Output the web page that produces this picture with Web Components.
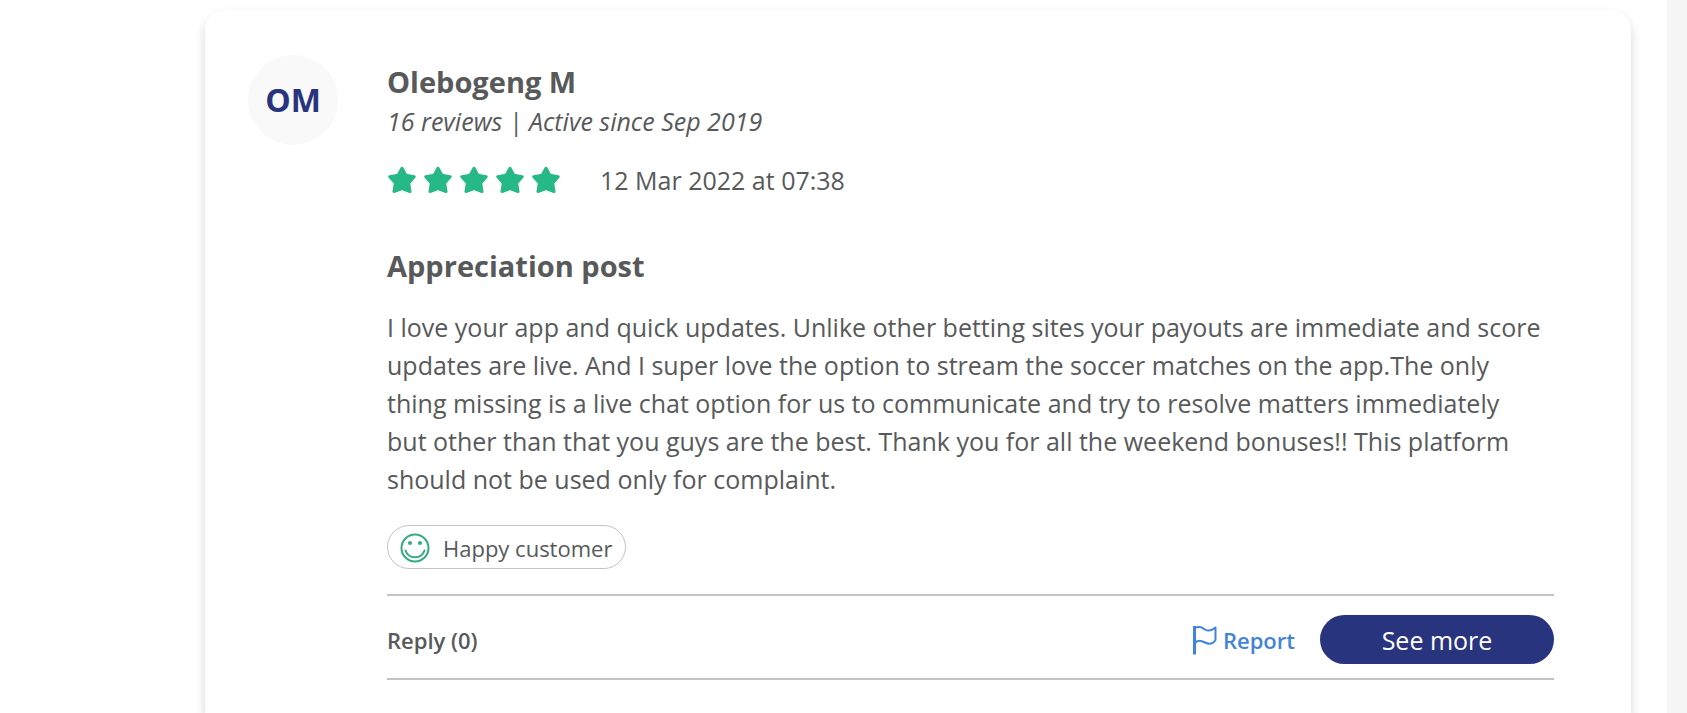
<!DOCTYPE html>
<html lang="en">
<head>
<meta charset="utf-8">
<meta name="viewport" content="width=device-width, initial-scale=1">
<title>Appreciation post</title>
<style>
  body {
    margin: 0;
    background: #fff;
    color: #58595b;
    font-family: "Open Sans", "Noto Sans", sans-serif;
    font-size: 25px;
    line-height: 38px;
  }
</style>
</head>
<body>
<review-page>
  <review-card>
    <user-avatar slot="avatar">OM</user-avatar>
    <span slot="name">Olebogeng M</span>
    <span slot="meta">16 reviews | Active since Sep 2019</span>
    <star-rating slot="rating" value="5"></star-rating>
    <time slot="date" datetime="2022-03-12T07:38">12 Mar 2022 at 07:38</time>
    <span slot="title">Appreciation post</span>
    I love your app and quick updates. Unlike other betting sites your payouts are immediate and score updates are live. And I super love the option to stream the soccer matches on the app.The only thing missing is a live chat option for us to communicate and try to resolve matters immediately but other than that you guys are the best. Thank you for all the weekend bonuses!! This platform should not be used only for complaint.
    <mood-tag slot="tag">Happy customer</mood-tag>
    <review-actions slot="actions">
      <span slot="reply">Reply (0)</span>
      <span slot="report">Report</span>
      <span slot="more">See more</span>
    </review-actions>
  </review-card>
</review-page>

<script>
(function () {
  function define(name, html, setup) {
    const tmpl = document.createElement("template");
    tmpl.innerHTML = html;

    customElements.define(name, class extends HTMLElement {
      constructor() {
        super();
        this.attachShadow({ mode: "open" }).appendChild(tmpl.content.cloneNode(true));
      }

      connectedCallback() {
        if (setup) setup(this, this.shadowRoot);
      }
    });
  }

  define("review-page", `
    <style>
      :host {
        display: grid;
        grid-template-columns: 1fr 20px;
        min-height: 100vh;
      }
      main {
        display: grid;
        padding: 10px 36px 0 205px;
      }
      .gutter {
        background: #f5f5f5;
      }
    </style>
    <main><slot></slot></main>
    <div class="gutter"></div>
  `);

  define("review-card", `
    <style>
      :host {
        display: block;
        border-radius: 20px 20px 0 0;
        background: #fff;
        box-shadow: 0 6px 12px rgba(0, 0, 0, 0.16);
      }
      article {
        display: grid;
        grid-template-columns: 90px 1fr;
        gap: 49px;
        padding: 45px 77px 0 43px;
      }
      .body {
        padding-top: 7px;
      }
      h2, h3 {
        margin: 0;
        font-size: 29px;
        line-height: 40px;
        font-weight: 700;
      }
      p {
        margin: 0;
      }
      .meta {
        font-style: italic;
      }
      .rating {
        display: flex;
        align-items: center;
        gap: 40px;
        margin: 21px 0 47px;
      }
      .text {
        margin: 22px 0 27px;
        padding-right: 12px;
      }
    </style>
    <article>
      <slot name="avatar"></slot>
      <div class="body">
        <h2><slot name="name"></slot></h2>
        <p class="meta"><slot name="meta"></slot></p>
        <div class="rating">
          <slot name="rating"></slot>
          <slot name="date"></slot>
        </div>
        <h3><slot name="title"></slot></h3>
        <p class="text"><slot></slot></p>
        <slot name="tag"></slot>
        <slot name="actions"></slot>
      </div>
    </article>
  `);

  define("user-avatar", `
    <style>
      :host {
        display: grid;
        place-items: center;
        width: 90px;
        height: 90px;
        border-radius: 50%;
        background: #f9f9f9;
        color: #29347f;
        font-size: 32px;
        font-weight: 700;
      }
    </style>
    <slot></slot>
  `);

  define("star-rating", `
    <style>
      :host {
        display: flex;
        gap: 8px;
        padding-left: 1px;
      }
      svg {
        width: 28px;
        height: 28px;
        fill: #27b887;
        stroke: #27b887;
        stroke-width: 3;
        stroke-linejoin: round;
      }
    </style>
  `, function (host, root) {
    if (root.querySelector("svg")) return;
    const count = Number(host.getAttribute("value"));
    host.setAttribute("role", "img");
    host.setAttribute("aria-label", count + " stars");
    for (let i = 0; i < count; i++) {
      root.innerHTML += `<svg viewBox="0 0 28 28" aria-hidden="true"><path d="M14 2.200L17.900 9.200L26.200 10.700L20.700 17L22 25.500L14 22.600L6 25.500L7.300 17L1.800 10.700L10.100 9.200Z"/></svg>`;
    }
  });

  define("mood-tag", `
    <style>
      :host {
        display: flex;
        align-items: center;
        gap: 13px;
        box-sizing: border-box;
        width: fit-content;
        height: 44px;
        padding: 2px 13px 0 12px;
        border: 1px solid #c4c4c4;
        border-radius: 22px;
        font-size: 22px;
      }
      svg {
        width: 30px;
        height: 30px;
        fill: none;
        stroke: #35ab84;
        stroke-width: 2;
        stroke-linecap: round;
      }
      .eye {
        fill: #35ab84;
        stroke: none;
      }
    </style>
    <svg viewBox="0 0 30 30" aria-hidden="true">
      <circle cx="15" cy="15" r="13.500"/>
      <circle class="eye" cx="10" cy="10" r="2"/>
      <circle class="eye" cx="20" cy="10" r="2"/>
      <path d="M5.500 17.500C8.500 26.500 21.500 26.500 24.500 17.500"/>
    </svg>
    <slot></slot>
  `);

  define("review-actions", `
    <style>
      :host {
        display: flex;
        align-items: center;
        gap: 25px;
        margin-top: 25px;
        padding: 19px 0 14px;
        border: solid #c4c4c4;
        border-width: 2px 0;
      }
      button {
        margin: 0;
        padding: 0;
        border: 0;
        background: none;
        color: inherit;
        font: inherit;
        cursor: pointer;
      }
      .reply, .report {
        font-size: 22px;
        font-weight: 600;
      }
      .reply {
        margin-right: auto;
      }
      .report {
        display: flex;
        align-items: center;
        gap: 6px;
        color: #4383da;
      }
      .more {
        width: 234px;
        height: 49px;
        border-radius: 25px;
        background: #29347f;
        color: #fff;
      }
      svg {
        width: 25px;
        height: 30px;
        fill: none;
        stroke: currentColor;
        stroke-width: 2;
        stroke-linejoin: round;
      }
      .pole {
        stroke-width: 3;
      }
    </style>
    <button class="reply" type="button"><slot name="reply"></slot></button>
    <button class="report" type="button">
      <svg viewBox="0 0 25 30" aria-hidden="true">
        <path class="pole" d="M2.500 1V29.500"/>
        <path d="M3 2.500C8 1 10 2.500 13 4.500C17 7 20 5.500 23.500 2.500V15C21 19 17 19.500 13 17.500C9 15.500 5.500 14.500 3 18"/>
      </svg>
      <slot name="report"></slot>
    </button>
    <button class="more" type="button"><slot name="more"></slot></button>
  `);
})();
</script>
</body>
</html>
